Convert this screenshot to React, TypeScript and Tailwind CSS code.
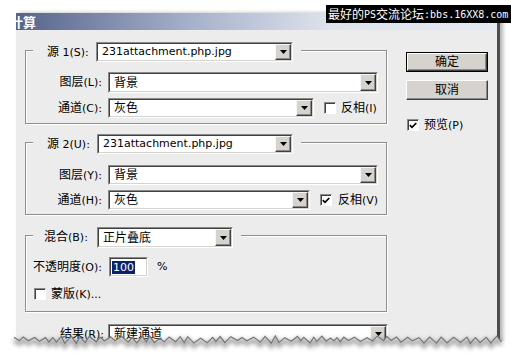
import React from "react";

const CJK = /([\u2E80-\u9FFF\uFF00-\uFFEF\u3000-\u303F]+)/;

function T({ s }: { s: string }) {
  const parts = s.split(CJK).filter((p) => p !== "");
  return (
    <>
      {parts.map((p, i) =>
        /[\u2E80-\u9FFF\uFF00-\uFFEF\u3000-\u303F]/.test(p) ? (
          <span key={i} className="text-[12px]">{p}</span>
        ) : (
          <span key={i}>{p}</span>
        )
      )}
    </>
  );
}

function Arrow() {
  return (
    <div className="w-[16px] h-full shrink-0 bg-[#d6d3ce] border border-t-[#f6f6f6] border-l-[#f6f6f6] border-b-[#404040] border-r-[#404040] shadow-[inset_-1px_-1px_0_#8a8a8a] flex items-center justify-center">
      <svg width="7" height="4" viewBox="0 0 7 4">
        <path d="M0 0h7L3.5 4z" fill="#000" />
      </svg>
    </div>
  );
}

function Select({ cls, text }: { cls: string; text: string }) {
  return (
    <div className={"flex shrink-0 border border-t-[#8a8a8a] border-l-[#8a8a8a] border-b-white border-r-white " + cls}>
      <div className="flex flex-1 bg-white border border-t-[#404040] border-l-[#404040] border-b-[#d6d3ce] border-r-[#d6d3ce]">
        <div className="flex-1 flex items-center pl-[4px] whitespace-nowrap overflow-hidden">
          <T s={text} />
        </div>
        <Arrow />
      </div>
    </div>
  );
}

function Check({ checked }: { checked?: boolean }) {
  return (
    <div className="w-[12px] h-[12px] shrink-0 bg-white border border-t-[#8a8a8a] border-l-[#8a8a8a] border-b-white border-r-white shadow-[inset_1px_1px_0_#404040] flex items-center justify-center">
      {checked && (
        <svg width="8" height="7" viewBox="0 0 8 7">
          <path d="M0.8 3.2 L3 5.4 L7.3 1" stroke="#000" strokeWidth="1.7" fill="none" />
        </svg>
      )}
    </div>
  );
}

function Button({ text, def }: { text: string; def?: boolean }) {
  return (
    <div className={"w-[82px] h-[20px] " + (def ? "border border-black" : "")}>
      <div className="w-full h-full bg-[#d6d3ce] border border-t-white border-l-white border-b-[#404040] border-r-[#404040] shadow-[inset_-1px_-1px_0_#8a8a8a] flex items-center justify-center">
        <T s={text} />
      </div>
    </div>
  );
}

function rand(seed: number) {
  let s = seed;
  return () => {
    s = (s * 9301 + 49297) % 233280;
    return s / 233280;
  };
}

const jag = (() => {
  const r = rand(7);
  const pts: [number, number][] = [];
  let x = 14;
  let up = true;
  while (x < 506) {
    pts.push([x, up ? 11 + r() * 2.5 : 15.5 + r() * 3]);
    x += 3 + r() * 4;
    up = !up;
  }
  return pts;
})();

function TornEdge() {
  const line = jag.map((p) => p.join(",")).join(" ");
  const poly = `${line} 511,14 511,35 0,35 0,14`;
  const shadow = jag.map(([x, y]) => `${x},${y + 3}`).join(" ");
  return (
    <svg className="absolute left-0 top-[325px]" width="511" height="35" viewBox="0 0 511 35">
      <defs>
        <filter id="b" x="-5%" y="-100%" width="110%" height="300%">
          <feGaussianBlur stdDeviation="2" />
        </filter>
      </defs>
      <polygon points={poly} fill="#fff" />
      <polyline points={shadow} fill="none" stroke="#444" strokeWidth="4" opacity="0.5" filter="url(#b)" />
      <polyline points={line} fill="none" stroke="#777" strokeWidth="1.2" />
    </svg>
  );
}

function Group({ children, cls }: { children: React.ReactNode; cls: string }) {
  return (
    <div className={"w-[362px] border border-[#8e8e8e] shadow-[inset_1px_1px_0_#fff,1px_1px_0_#fff] flex flex-col " + cls}>
      {children}
    </div>
  );
}

export default function App() {
  return (
    <div className="relative w-[511px] h-[360px] bg-white overflow-hidden text-[11px] text-black font-['DejaVu_Sans','Noto_Sans_CJK_SC',sans-serif]">
      <div className="ml-[16px] mt-[13px] w-[484px] h-[330px] bg-[#ececec] border-r-[3px] border-[#4e4e4e] shadow-[3px_0_4px_rgba(0,0,0,0.3)] overflow-hidden flex flex-col">
        <div className="h-[17px] shrink-0 bg-[linear-gradient(to_right,#56648c,#a3aec8_35%,#dde2ec_65%,#e6e9f0)] flex items-center overflow-hidden">
          <span className="ml-[-6px] text-white font-bold text-[13px] font-['Noto_Sans_CJK_SC',sans-serif] leading-none">
            计算
          </span>
        </div>
        <div className="flex items-start">
          <div className="ml-[9px] pt-[20px] flex flex-col">
            <Group cls="pb-[5px]">
              <div className="flex w-fit items-center ml-[7px] -mt-[9px] bg-[#ececec] pl-[14px] pr-[8px]">
                <div className="w-[49px]"><T s="源 1(S):" /></div>
                <Select cls="w-[197px] h-[20px]" text="231attachment.php.jpg" />
              </div>
              <div className="flex items-center mt-[10px]">
                <div className="w-[76px] text-right"><T s="图层(L):" /></div>
                <Select cls="ml-[6px] w-[270px] h-[21px]" text="背景" />
              </div>
              <div className="flex items-center mt-[5px]">
                <div className="w-[76px] text-right"><T s="通道(C):" /></div>
                <Select cls="ml-[6px] w-[206px] h-[20px]" text="灰色" />
                <div className="ml-[10px]"><Check /></div>
                <div className="ml-[5px]"><T s="反相(I)" /></div>
              </div>
            </Group>
            <Group cls="mt-[18px] pb-[4px]">
              <div className="flex w-fit items-center ml-[7px] -mt-[9px] bg-[#ececec] pl-[14px] pr-[8px]">
                <div className="w-[50px]"><T s="源 2(U):" /></div>
                <Select cls="w-[196px] h-[20px]" text="231attachment.php.jpg" />
              </div>
              <div className="flex items-center mt-[11px]">
                <div className="w-[76px] text-right"><T s="图层(Y):" /></div>
                <Select cls="ml-[6px] w-[270px] h-[20px]" text="背景" />
              </div>
              <div className="flex items-center mt-[5px]">
                <div className="w-[76px] text-right"><T s="通道(H):" /></div>
                <Select cls="ml-[6px] w-[202px] h-[20px]" text="灰色" />
                <div className="ml-[10px]"><Check checked /></div>
                <div className="ml-[6px]"><T s="反相(V)" /></div>
              </div>
            </Group>
            <Group cls="mt-[20px] pb-[7px]">
              <div className="flex w-fit items-center ml-[7px] -mt-[9px] bg-[#ececec] pl-[11px] pr-[8px]">
                <div className="w-[53px]"><T s="混合(B):" /></div>
                <Select cls="w-[136px] h-[21px]" text="正片叠底" />
              </div>
              <div className="flex items-center mt-[9px] pl-[7px]">
                <div className="w-[72px] whitespace-nowrap"><T s="不透明度(O):" /></div>
                <div className="ml-[4px] w-[39px] h-[20px] flex border border-t-[#8a8a8a] border-l-[#8a8a8a] border-b-white border-r-white">
                  <div className="flex-1 flex items-center bg-white border border-t-[#404040] border-l-[#404040] border-b-[#d6d3ce] border-r-[#d6d3ce] pl-[1px]">
                    <span className="bg-[#0a246a] text-white leading-[13px] px-[1px]">100</span>
                  </div>
                </div>
                <div className="ml-[9px]">%</div>
              </div>
              <div className="flex items-center mt-[8px] pl-[8px]">
                <Check />
                <div className="ml-[5px]"><T s="蒙版(K)..." /></div>
              </div>
            </Group>
            <div className="flex items-center mt-[12px]">
              <div className="w-[79px] text-right"><T s="结果(R):" /></div>
              <Select cls="ml-[4px] w-[280px] h-[21px]" text="新建通道" />
            </div>
          </div>
          <div className="ml-[18px] pt-[22px] flex flex-col">
            <Button text="确定" def />
            <div className="mt-[8px]"><Button text="取消" /></div>
            <div className="flex items-center mt-[16px] ml-[1px]">
              <Check checked />
              <div className="ml-[5px]"><T s="预览(P)" /></div>
            </div>
          </div>
        </div>
      </div>
      <TornEdge />
      <div className="absolute left-[326px] top-[5px] w-[185px] h-[18px] bg-black text-white flex items-center pl-[2px] whitespace-nowrap">
        <span className="text-[12px] font-['Noto_Sans_CJK_SC',sans-serif]">最好的</span>
        <span className="text-[10px] font-['DejaVu_Sans_Mono',monospace]">PS</span>
        <span className="text-[12px] font-['Noto_Sans_CJK_SC',sans-serif]">交流论坛</span>
        <span className="text-[10px] font-['DejaVu_Sans_Mono',monospace]">:bbs.16XX8.com</span>
      </div>
    </div>
  );
}
